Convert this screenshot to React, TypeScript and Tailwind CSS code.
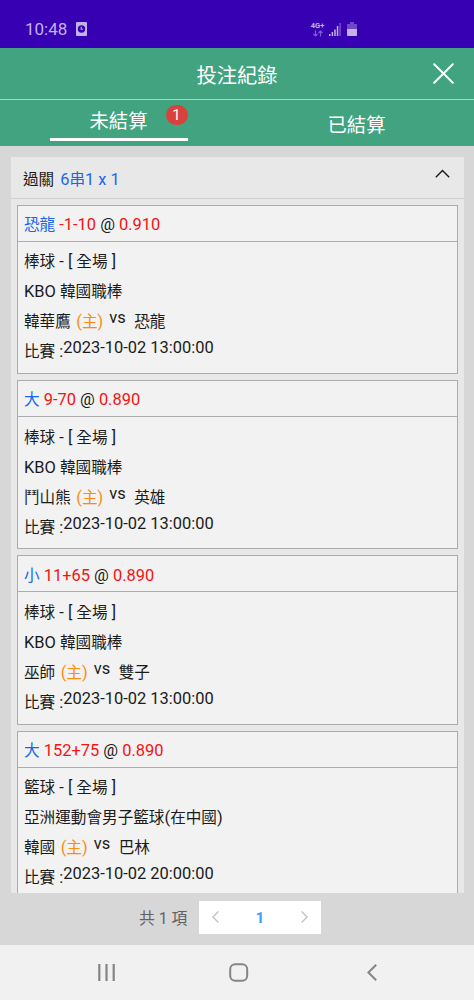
import React from 'react';

type Bet = {
  pick: string;
  line: string;
  odds: string;
  sport: string;
  league: string;
  home: string;
  away: string;
  time: string;
};

const bets: Bet[] = [
  { pick: '恐龍', line: '-1-10', odds: '0.910', sport: '棒球', league: 'KBO 韓國職棒', home: '韓華鷹', away: '恐龍', time: '2023-10-02 13:00:00' },
  { pick: '大', line: '9-70', odds: '0.890', sport: '棒球', league: 'KBO 韓國職棒', home: '鬥山熊', away: '英雄', time: '2023-10-02 13:00:00' },
  { pick: '小', line: '11+65', odds: '0.890', sport: '棒球', league: 'KBO 韓國職棒', home: '巫師', away: '雙子', time: '2023-10-02 13:00:00' },
  { pick: '大', line: '152+75', odds: '0.890', sport: '籃球', league: '亞洲運動會男子籃球(在中國)', home: '韓國', away: '巴林', time: '2023-10-02 20:00:00' },
];

// Chinese runs are set a little smaller than the latin text around them
const Mixed = ({ text }: { text: string }) => (
  <>
    {text.split(/([\u4e00-\u9fff]+)/).map((part, i) =>
      i % 2 === 1 ? <span key={i} className="text-[0.95em]">{part}</span> : part
    )}
  </>
);

const StatusBar = () => (
  <div className="flex h-12 shrink-0 items-center bg-[#3700b3] pl-[25px] pt-[10px] text-[#c3b2e8]">
    <span className="w-[51px] text-[17px] leading-5">10:48</span>
    <svg width="11" height="14" viewBox="0 0 11 14">
      <rect width="11" height="14" rx="1" fill="currentColor" />
      <circle cx="5.5" cy="7" r="3.7" fill="#3700b3" />
      <path d="M5.2 4.8v2.5h2" stroke="currentColor" strokeWidth="1.1" fill="none" />
    </svg>
    <div className="ml-[223px] flex w-[15px] flex-col items-center">
      <span className="text-[7.5px] font-bold leading-[8px]">4G+</span>
      <svg width="10" height="7" viewBox="0 0 10 7" fill="none" stroke="#7f5fd0" strokeWidth="1.2">
        <path d="M2.5 0.5v5.5M0.5 4l2 2 2-2M7.5 6.5V1M5.5 3l2-2 2 2" />
      </svg>
    </div>
    <svg className="ml-[4px]" width="12" height="13" viewBox="0 0 12 13" fill="currentColor">
      <path d="M0 11h1.5v2H0zM2.6 9h1.5v4H2.6zM5.2 6.5h1.5V13H5.2zM7.8 3h1.5v10H7.8z" />
      <path d="M10.4 0h1.5v13h-1.5z" opacity="0.45" />
    </svg>
    <svg className="ml-[6px]" width="10" height="14" viewBox="0 0 10 14" fill="currentColor">
      <path d="M0 2h3V0h4v2h3v5H0z" opacity="0.4" />
      <path d="M0 7h10v6a1 1 0 0 1-1 1H1a1 1 0 0 1-1-1z" />
    </svg>
  </div>
);

const BetCard = ({ bet }: { bet: Bet }) => (
  <div className="h-[169.4px] shrink-0 border border-[#acacac] bg-[#f2f2f2] text-[16.45px] text-[#1b1b1b]">
    <div className="flex h-[36px] items-center whitespace-pre border-b border-[#acacac] pl-[6px] pt-[4px] leading-6">
      <span className="text-[#1767ee]"><Mixed text={bet.pick} /></span>
      <span className="text-[#f51212]"> {bet.line}</span>
      <span> @ </span>
      <span className="text-[#f51212]">{bet.odds}</span>
    </div>
    <div className="pl-[6px] pt-[6px]">
      <div className="flex h-[30px] items-center"><span><Mixed text={`${bet.sport} - [ 全場 ]`} /></span></div>
      <div className="flex h-[30px] items-center"><span><Mixed text={bet.league} /></span></div>
      <div className="flex h-[30px] items-center">
        <span><Mixed text={bet.home} /></span>
        <span className="ml-[5.5px] text-[#fb8c0c]"><Mixed text="(主)" /></span>
        <span className="ml-[6px] pb-2">vs</span>
        <span className="ml-[8.5px]"><Mixed text={bet.away} /></span>
      </div>
      <div className="flex h-[30px] items-center">
        <span><Mixed text="比賽 :" /></span>
        <span className="pb-2">{bet.time}</span>
      </div>
    </div>
  </div>
);

const App = () => {
  return (
    <div className="flex h-[1000px] w-[474px] flex-col overflow-hidden bg-[#d7d7d7] font-[Roboto,'Noto_Sans_CJK_TC',sans-serif]">
      <StatusBar />

      {/* Title bar */}
      <div className="grid h-[52px] shrink-0 grid-cols-[1fr_auto_1fr] items-center border-b border-[#b5d3c7] bg-[#41a380] text-white">
        <span />
        <h1 className="pt-[6px] text-[20.3px]">投注紀錄</h1>
        <button className="mr-5 justify-self-end">
          <svg width="21" height="21" viewBox="0 0 21 21" fill="none" stroke="currentColor" strokeWidth="2" strokeLinecap="round">
            <path d="M1.2 1.2l18.6 18.6M19.8 1.2L1.2 19.8" />
          </svg>
        </button>
      </div>

      {/* Tabs */}
      <div className="grid h-[46px] shrink-0 grid-cols-2 bg-[#41a380] text-[19.3px] text-white">
        <div className="flex justify-center">
          <div className="relative h-[41px] w-[138px] border-b-[3px] border-white text-center leading-[44px]">
            未結算
            <span className="absolute right-0 top-[5px] flex h-[20px] w-[22px] items-center justify-center rounded-full bg-[#d9413d] pt-[1px] text-[15px] leading-none">1</span>
          </div>
        </div>
        <div className="pl-[2px] text-center leading-[51px]">已結算</div>
      </div>

      {/* Bet list */}
      <div className="ml-[11px] mr-[10px] mt-[11px] flex h-[736px] shrink-0 flex-col overflow-hidden bg-[#e8e8e8]">
        <div className="flex h-[42px] shrink-0 items-center justify-between border-b border-[#d0d0d0] pl-3 pr-[14px] text-[16.4px] text-[#1b1b1b]">
          <span className="pt-[5px]">
            <Mixed text="過關" />
            <span className="ml-[6px] text-[#1767ee]"><Mixed text="6串1 x 1" /></span>
          </span>
          <svg className="mb-[8px]" width="15" height="9" viewBox="0 0 15 9" fill="none" stroke="currentColor" strokeWidth="1.4">
            <path d="M0.8 8.2l6.7-6.8 6.7 6.8" />
          </svg>
        </div>
        <div className="flex flex-col gap-[6px] px-[6px] pt-[5.5px]">
          {bets.map((bet, i) => (
            <BetCard key={i} bet={bet} />
          ))}
        </div>
      </div>

      {/* Pagination */}
      <div className="flex h-[52px] shrink-0 items-start pl-[139px] pt-2 text-[#606266]">
        <span className="w-[60px] text-[15.8px] leading-[35px]">共 1 項</span>
        <div className="flex h-[33px] w-[122px] items-center justify-between bg-white px-[13px] text-[#c0c4cc]">
          <svg className="mb-[2px]" width="7" height="12" viewBox="0 0 7 12" fill="none" stroke="currentColor" strokeWidth="1.4">
            <path d="M6.4 0.6L1 6l5.4 5.4" />
          </svg>
          <span className="pt-[3px] text-[15.5px] font-bold text-[#409eff]">1</span>
          <svg className="mb-[2px]" width="7" height="12" viewBox="0 0 7 12" fill="none" stroke="currentColor" strokeWidth="1.4">
            <path d="M0.6 0.6L6 6 0.6 11.4" />
          </svg>
        </div>
      </div>

      {/* System navigation */}
      <div className="flex h-[55px] shrink-0 items-center bg-[#f1f1f1] pl-[98px] text-[#858585]">
        <svg width="17" height="17" viewBox="0 0 17 17" fill="none" stroke="currentColor" strokeWidth="2.2">
          <path d="M1.3 0v17M8.5 0v17M15.7 0v17" />
        </svg>
        <svg className="ml-[114px]" width="20" height="19" viewBox="0 0 20 19" fill="none" stroke="currentColor" strokeWidth="2">
          <rect x="1.2" y="1.2" width="17" height="16.6" rx="5" />
        </svg>
        <svg className="ml-[118px]" width="10" height="17" viewBox="0 0 10 17" fill="none" stroke="currentColor" strokeWidth="2">
          <path d="M9.2 0.7L1.4 8.5l7.8 7.8" />
        </svg>
      </div>
    </div>
  );
};

export default App;
